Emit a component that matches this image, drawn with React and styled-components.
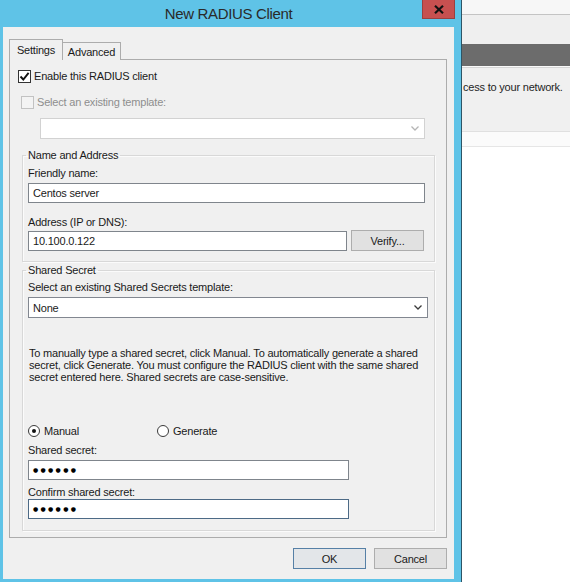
import React from "react";
import styled, { createGlobalStyle } from "styled-components";

const Global = createGlobalStyle`
  html, body { margin: 0; padding: 0; background: #fff; }
  body {
    font-family: "Liberation Sans", Arial, sans-serif;
    font-size: 11px;
    letter-spacing: -0.2px;
    color: #1a1a1a;
  }
  * { box-sizing: border-box; }
`;

const Screen = styled.div`
  width: 570px;
  height: 582px;
  display: flex;
  overflow: hidden;
`;

const Window = styled.div`
  width: 462px;
  height: 582px;
  flex: none;
  display: flex;
  flex-direction: column;
  background: #5fc3e7;
  border-right: 1px solid #2d5566;
  padding: 0 7px 3px 3px;
`;

const TitleBar = styled.div`
  height: 27px;
  flex: none;
  display: grid;
  grid-template-columns: 1fr auto 1fr;
  align-items: start;
`;

const Title = styled.div`
  grid-column: 2;
  font-size: 15px;
  letter-spacing: -0.35px;
  line-height: 18px;
  margin-top: 5px;
  color: #2a2a2a;
`;

const CloseButton = styled.div`
  grid-column: 3;
  justify-self: end;
  margin-right: -1px;
  width: 33px;
  height: 19px;
  background: #c75050;
  border: 1px solid #9b4040;
  border-top: none;
  display: flex;
  align-items: center;
  justify-content: center;
`;

const Content = styled.div`
  flex: 1;
  background: #f0f0f0;
  padding: 12px 7px 0 6px;
  display: flex;
  flex-direction: column;
`;

const TabStrip = styled.div`
  display: flex;
  align-items: flex-end;
  height: 21px;
  margin-bottom: -1px;
`;

const Tab = styled.div`
  height: ${(p) => (p.$active ? "21px" : "18px")};
  width: ${(p) => p.$w}px;
  margin-left: ${(p) => (p.$active ? "0" : "-1px")};
  border: 1px solid #acacac;
  border-bottom: none;
  background: #f0f0f0;
  position: relative;
  z-index: ${(p) => (p.$active ? 1 : 0)};
  display: flex;
  justify-content: center;
  align-items: ${(p) => (p.$active ? "flex-start" : "center")};
  padding-top: ${(p) => (p.$active ? "3px" : "0")};
  line-height: 14px;
`;

const Panel = styled.div`
  width: 438px;
  height: 479px;
  flex: none;
  border: 1px solid #acacac;
  background: #f0f0f0;
  display: flex;
  flex-direction: column;
  padding: 9px 5px 0 8px;
`;

const CheckRow = styled.div`
  display: flex;
  align-items: center;
  gap: 3px;
  height: 14px;
  line-height: 14px;
  margin-top: ${(p) => p.$mt || 0}px;
  margin-left: ${(p) => p.$ml || 0}px;
  color: ${(p) => (p.$disabled ? "#8e8e8e" : "#1a1a1a")};
`;

const Box = styled.span`
  width: 13px;
  height: 13px;
  flex: none;
  border: 1px solid ${(p) => (p.$disabled ? "#c2c2c2" : "#333")};
  background: ${(p) => (p.$disabled ? "#f3f3f3" : "#fff")};
  display: flex;
  align-items: center;
  justify-content: center;
`;

const Combo = styled.div`
  width: ${(p) => p.$w}px;
  height: 21px;
  margin-top: ${(p) => p.$mt || 0}px;
  margin-left: ${(p) => p.$ml || 0}px;
  border: 1px solid ${(p) => (p.$disabled ? "#d2d2d2" : "#828790")};
  background: #fff;
  display: flex;
  align-items: center;
  justify-content: space-between;
  padding: 0 5px 0 4px;
  line-height: 14px;
`;

const Group = styled.fieldset`
  margin: ${(p) => p.$mt}px 6px 0 4px;
  padding: 0 14px ${(p) => p.$pb}px 3px;
  border: 1px solid #d8d8d8;
  box-shadow: inset 1px 1px 0 #fbfbfb, 1px 1px 0 #fbfbfb;
  min-width: 0;
  display: flex;
  flex-direction: column;
`;

const Legend = styled.legend`
  padding: 0 2px;
  line-height: 14px;
`;

const FieldLabel = styled.div`
  line-height: 14px;
  margin-top: ${(p) => p.$mt || 0}px;
  padding-left: 2px;
`;

const TextBox = styled.div`
  width: ${(p) => p.$w}px;
  height: 20px;
  margin-top: ${(p) => p.$mt || 0}px;
  margin-left: 2px;
  border: 1px solid ${(p) => (p.$focused ? "#4d6a86" : "#7f858c")};
  background: #fff;
  line-height: 18px;
  padding: 0 4px;
  flex: none;
  display: flex;
  align-items: center;
`;

const Dots = styled.span`
  font-family: "DejaVu Sans", sans-serif;
  font-size: 6px;
  letter-spacing: 2.3px;
  color: #000;
  line-height: 18px;
`;

const InlineRow = styled.div`
  display: flex;
  align-items: flex-end;
  gap: 4px;
  height: 21px;
  margin-top: ${(p) => p.$mt || 0}px;
`;

const Button = styled.div`
  width: 73px;
  height: 21px;
  flex: none;
  border: 1px solid ${(p) => (p.$default ? "#5680a6" : "#adadad")};
  background: ${(p) => (p.$default ? "#e3e6e9" : "#e1e1e1")};
  display: flex;
  align-items: center;
  justify-content: center;
  line-height: 14px;
  color: #1a1a1a;
`;

const Paragraph = styled.p`
  margin: ${(p) => p.$mt}px 0 0 0;
  padding-left: 3px;
  line-height: 12px;
  white-space: nowrap;
`;

const RadioRow = styled.div`
  display: flex;
  align-items: center;
  height: 14px;
  margin-top: ${(p) => p.$mt}px;
  padding-left: 2px;
`;

const RadioOption = styled.div`
  display: flex;
  align-items: center;
  gap: 4px;
  width: ${(p) => (p.$w ? `${p.$w}px` : "auto")};
  line-height: 14px;
`;

const RadioCircle = styled.span`
  width: 12px;
  height: 12px;
  flex: none;
  border-radius: 50%;
  border: 1px solid #3a3a3a;
  background: #fff;
  display: flex;
  align-items: center;
  justify-content: center;
  &::after {
    content: "";
    width: 4px;
    height: 4px;
    border-radius: 50%;
    background: ${(p) => (p.$checked ? "#111" : "transparent")};
  }
`;

const ButtonBar = styled.div`
  display: flex;
  justify-content: flex-end;
  gap: 8px;
  margin-top: 10px;
`;

const Backdrop = styled.div`
  flex: 1;
  display: flex;
  flex-direction: column;
  background: #fff;
  min-width: 0;
`;

const BackTop = styled.div`
  height: 15px;
  flex: none;
  background: #f7f7f7;
  border-bottom: 1px solid #c4c4c4;
`;

const BackToolbar = styled.div`
  height: 29px;
  flex: none;
  background: #efefef;
`;

const BackBand = styled.div`
  height: 23px;
  flex: none;
  background: #6c6c6c;
  border-bottom: 1px solid #fafafa;
`;

const BackDescription = styled.div`
  height: 64px;
  flex: none;
  background: #f0f0f0;
  border-top: 1px solid #d6d6d6;
  white-space: nowrap;
  padding: 12px 0 0 1px;
  line-height: 14px;
  color: #1e1e1e;
`;

const BackHeaderRow = styled.div`
  height: 16px;
  flex: none;
  background: #fbfbfb;
  border-top: 1px solid #e0e0e0;
  border-bottom: 1px solid #e6e6e6;
`;

const Chevron = ({ color }) => (
  <svg width="8" height="5" viewBox="0 0 8 5">
    <path d="M0.5 0.5 L4 4 L7.5 0.5" fill="none" stroke={color} strokeWidth="1.3" />
  </svg>
);

const Check = () => (
  <svg width="11" height="11" viewBox="0 0 11 11">
    <path d="M1.5 5.5 L4.3 8.5 L9.6 1.8" fill="none" stroke="#111" strokeWidth="1.9" />
  </svg>
);

const CloseGlyph = () => (
  <svg width="10" height="9" viewBox="0 0 10 9">
    <path d="M1 0.8 L9 8.2 M9 0.8 L1 8.2" stroke="#111" strokeWidth="2.2" />
  </svg>
);

export default function App() {
  return (
    <>
      <Global />
      <Screen>
        <Window>
          <TitleBar>
            <Title>New RADIUS Client</Title>
            <CloseButton>
              <CloseGlyph />
            </CloseButton>
          </TitleBar>
          <Content>
            <TabStrip>
              <Tab $active $w={54}>Settings</Tab>
              <Tab $w={59}>Advanced</Tab>
            </TabStrip>
            <Panel>
              <CheckRow>
                <Box>
                  <Check />
                </Box>
                Enable this RADIUS client
              </CheckRow>
              <CheckRow $mt={12} $ml={3} $disabled>
                <Box $disabled />
                Select an existing template:
              </CheckRow>
              <Combo $disabled $w={385} $mt={9} $ml={22}>
                <span />
                <Chevron color="#b5b5b5" />
              </Combo>

              <Group $mt={9} $pb={10}>
                <Legend>Name and Address</Legend>
                <FieldLabel $mt={4}>Friendly name:</FieldLabel>
                <TextBox $w={397} $mt={3}>Centos server</TextBox>
                <FieldLabel $mt={12}>Address (IP or DNS):</FieldLabel>
                <InlineRow $mt={1}>
                  <TextBox $w={319}>10.100.0.122</TextBox>
                  <Button>Verify...</Button>
                </InlineRow>
              </Group>

              <Group $mt={1} $pb={11}>
                <Legend>Shared Secret</Legend>
                <FieldLabel $mt={3}>Select an existing Shared Secrets template:</FieldLabel>
                <Combo $w={400} $mt={3} $ml={2}>
                  <span>None</span>
                  <Chevron color="#3a3a3a" />
                </Combo>
                <Paragraph $mt={29}>
                  To manually type a shared secret, click Manual. To automatically generate a shared
                  <br />
                  secret, click Generate. You must configure the RADIUS client with the same shared
                  <br />
                  secret entered here. Shared secrets are case-sensitive.
                </Paragraph>
                <RadioRow $mt={41}>
                  <RadioOption $w={129}>
                    <RadioCircle $checked />
                    Manual
                  </RadioOption>
                  <RadioOption>
                    <RadioCircle />
                    Generate
                  </RadioOption>
                </RadioRow>
                <FieldLabel $mt={5}>Shared secret:</FieldLabel>
                <TextBox $w={321} $mt={3}>
                  <Dots>●●●●●●</Dots>
                </TextBox>
                <FieldLabel $mt={5}>Confirm shared secret:</FieldLabel>
                <TextBox $w={321} $focused>
                  <Dots>●●●●●●</Dots>
                </TextBox>
              </Group>
            </Panel>
            <ButtonBar>
              <Button $default>OK</Button>
              <Button>Cancel</Button>
            </ButtonBar>
          </Content>
        </Window>
        <Backdrop>
          <BackTop />
          <BackToolbar />
          <BackBand />
          <BackDescription>cess to your network.</BackDescription>
          <BackHeaderRow />
        </Backdrop>
      </Screen>
    </>
  );
}
